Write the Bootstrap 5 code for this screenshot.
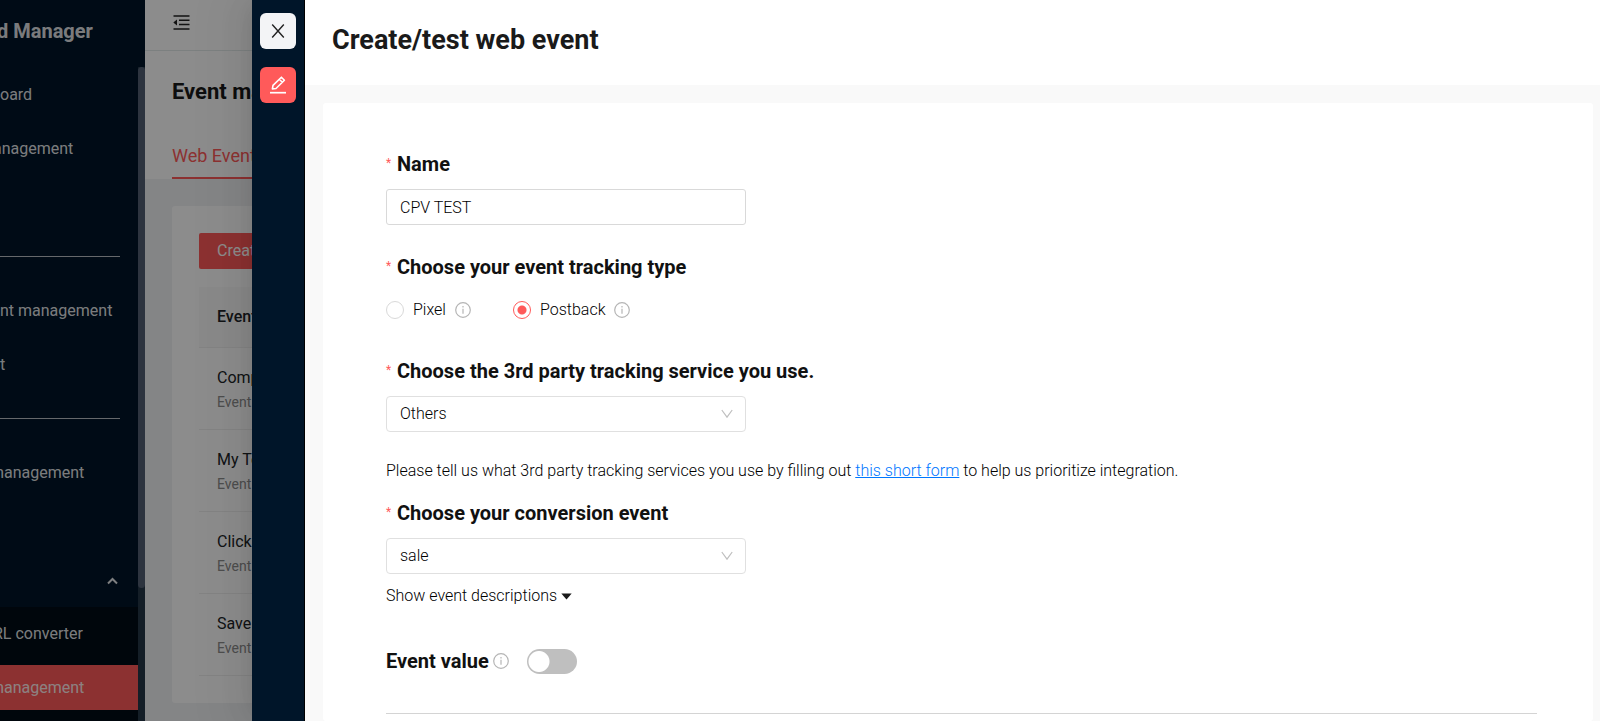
<!DOCTYPE html>
<html lang="en">
<head>
<meta charset="utf-8">
<meta name="viewport" content="width=device-width, initial-scale=1">
<title>Create/test web event</title>
<link href="https://cdn.jsdelivr.net/npm/bootstrap@5.3.0/dist/css/bootstrap.min.css" rel="stylesheet">
<style>
  :root { --accent: #ff5a5a; --navy: #001529; }
  body { font-family: Roboto, "Liberation Sans", sans-serif; font-size: 16px; line-height: 24px; color: #1a1a1a; }

  /* dimmed page behind the drawer */
  .backdrop-page { width: 252px; }
  .dimmer { background: rgba(0, 0, 0, .45); }
  .side { width: 145px; background: var(--navy); color: rgba(255, 255, 255, .9); }
  .side-brand { height: 67px; font-size: 20px; font-weight: 700; line-height: 63px; text-indent: -3px; }
  .side-scroll { width: 7px; background: #253747; }
  .side-thumb { height: 521px; background: #526074; border-radius: 4px; }
  .side-list { padding-top: 5px; }
  .side-item { height: 45px; margin-bottom: 9px; color: inherit; }
  .side-item hr { width: 120px; margin: 0; opacity: .8; }
  .cut-sm { text-indent: -7px; }
  .cut-lg { text-indent: -10px; }
  .side-caret { margin-left: 107px; }
  .side-sub { background: #000c17; margin-top: -5px; padding-top: 4px; }
  .side-item.current { background: var(--accent); }
  .top-strip { height: 51px; border-bottom: 1px solid #e2eaea; padding: 14px 28px; }
  .page-head { height: 128px; padding: 0 27px; }
  .page-title { font-size: 22px; line-height: 30px; font-weight: 700; padding-top: 26px; margin-bottom: 37px; }
  .page-tab { font-size: 18px; color: var(--accent); height: 35px; border-bottom: 2px solid var(--accent); }
  .page-body { background: #f0f2f5; padding: 27px 0 18px 27px; }
  .page-card { padding: 27px 0 27px 27px; border-radius: 3px; }
  .btn-accent { --bs-btn-bg: var(--accent); --bs-btn-color: #fff; --bs-btn-hover-bg: #ff7676; --bs-btn-hover-color: #fff; --bs-btn-border-radius: 2px; height: 36px; padding: 0 18px; border: 0; margin-bottom: 18px; }
  .event-table { width: 300px; --bs-table-bg: transparent; margin: 0; }
  .event-table th { height: 60px; padding: 0 18px; font-weight: 500; vertical-align: middle; background: #f9f9f9; border-color: #efefef; }
  .event-table td { height: 82px; padding: 4px 18px 0; border-color: #efefef; }
  .event-table small { font-size: 14px; color: #8c8c8c; }

  /* drawer */
  .drawer { z-index: 2; box-shadow: -6px 0 16px -8px rgba(0,0,0,.08), -9px 0 28px rgba(0,0,0,.05), -12px 0 48px 16px rgba(0,0,0,.03); }
  .rail { width: 53px; background: var(--navy); border-right: 1px solid #000; padding-top: 13px; gap: 18px; }
  .rail-btn { width: 36px; height: 36px; padding: 0; border: 0; border-radius: 6px; }
  .rail-close { background: #f3f4f6; }
  .rail-edit { background: var(--accent); }
  .drawer-head { height: 85px; padding: 0 27px; }
  .drawer-title { font-size: 27px; line-height: 80px; font-weight: 700; margin: 0; }
  .drawer-body { background: #f9f9f9; padding: 18px 7px 0 18px; }
  .form-panel { padding: 46px 56px 0 63px; border-radius: 3px; }
  .field-title { font-size: 20px; line-height: 30px; font-weight: 700; color: #111; margin: 0 0 10px; display: flex; }
  .field-title.req::before { content: "*"; color: var(--accent); font-size: 12px; font-weight: 400; width: 11px; line-height: 28px; }
  .field-box { width: 360px; height: 36px; padding: 0 13px; font-size: 16px; color: #000; border-color: #d9d9d9; border-radius: 3px; }
  select.field-box { border-radius: 4px; border-color: #e0e0e0;
    background: #fff url("data:image/svg+xml,%3Csvg xmlns='http://www.w3.org/2000/svg' viewBox='0 0 12 10' fill='none' stroke='%23bfbfbf' stroke-width='1.2'%3E%3Cpath d='M.8 1 6 8.2 11.2 1'/%3E%3C/svg%3E") no-repeat right 12px center / 12px 10px; }
  .gap-after { margin-bottom: 27px; }
  .choice-row { height: 36px; margin-bottom: 28px; gap: 42px; }
  .choice { gap: 9px; }
  .choice .form-check-input { width: 18px; height: 18px; margin: 0; border-color: #d9d9d9; }
  .choice .form-check-input:checked { background: #fff radial-gradient(circle, var(--accent) 4px, transparent 5px); border-color: var(--accent); }
  .drawer-body, .drawer-body .field-box { font-weight: 300; color: #000; }
  .form-hint { margin-bottom: 15px; }
  .form-hint a { color: #0077ff; }
  .link-plain { border: 0; background: none; padding: 0; margin: 10px 0 38px; color: inherit; font-weight: inherit; gap: 4px; }
  .value-row { height: 30px; margin-bottom: 37px; }
  .value-row .field-title { margin: 0; }
  .value-row .form-switch .form-check-input { width: 50px; height: 25px; margin: 0 0 0 2px; float: none; border: 0; background: #bfbfbf radial-gradient(circle at 12px 50%, #fff 10px, transparent 11px); }
  .rule { margin: 0; color: #b8b8b8; opacity: .6; }
</style>
</head>
<body class="d-flex vh-100 overflow-hidden">

<div class="backdrop-page position-relative d-flex flex-shrink-0 overflow-hidden" aria-hidden="true">
  <aside class="side d-flex flex-column flex-shrink-0 text-nowrap overflow-hidden">
    <div class="side-brand flex-shrink-0">d Manager</div>
    <div class="d-flex flex-grow-1 overflow-hidden">
      <nav class="side-list flex-grow-1">
        <a class="side-item d-flex align-items-center text-decoration-none" href="#">oard</a>
        <a class="side-item cut-sm d-flex align-items-center text-decoration-none" href="#">anagement</a>
        <div class="side-item"></div>
        <div class="side-item d-flex align-items-center"><hr></div>
        <a class="side-item d-flex align-items-center text-decoration-none" href="#">nt management</a>
        <a class="side-item d-flex align-items-center text-decoration-none" href="#">t</a>
        <div class="side-item d-flex align-items-center"><hr></div>
        <a class="side-item cut-lg d-flex align-items-center text-decoration-none" href="#">management</a>
        <div class="side-item"></div>
        <div class="side-item d-flex align-items-center">
          <svg class="side-caret" width="11" height="8" viewBox="0 0 11 8" fill="none" stroke="currentColor" stroke-width="2"><path d="M1 6.5 5.5 2 10 6.5"/></svg>
        </div>
        <div class="side-sub">
          <a class="side-item cut-sm d-flex align-items-center text-decoration-none" href="#">RL converter</a>
          <a class="side-item cut-lg current d-flex align-items-center text-decoration-none" href="#">management</a>
          <div class="side-item"></div>
        </div>
      </nav>
      <div class="side-scroll flex-shrink-0"><div class="side-thumb"></div></div>
    </div>
  </aside>
  <main class="flex-shrink-0 bg-white text-nowrap d-flex flex-column">
    <div class="top-strip">
      <svg class="d-block" width="17" height="17" viewBox="0 0 17 17" fill="none" stroke="#222" stroke-width="1.5"><path d="M.5 2h16M6 6.3h10.500M6 10.600h10.500M.5 15h16"/><path d="M4 5.500v6L.3 8.500z" fill="#222" stroke="none"/></svg>
    </div>
    <div class="page-head">
      <h1 class="page-title">Event management</h1>
      <div class="page-tab">Web Events</div>
    </div>
    <div class="page-body flex-grow-1">
      <div class="page-card bg-white">
        <button class="btn btn-accent" type="button" tabindex="-1">Create event</button>
        <table class="table event-table align-middle">
          <thead><tr><th>Event</th></tr></thead>
          <tbody>
            <tr><td>Complete<br><small>Event</small></td></tr>
            <tr><td>My Test<br><small>Event</small></td></tr>
            <tr><td>Click<br><small>Event</small></td></tr>
            <tr><td>Save<br><small>Event</small></td></tr>
          </tbody>
        </table>
      </div>
    </div>
  </main>
  <div class="dimmer position-absolute top-0 start-0 w-100 h-100"></div>
</div>

<section class="drawer position-relative d-flex flex-grow-1">
  <div class="rail d-flex flex-column align-items-center flex-shrink-0">
    <button class="rail-btn rail-close d-flex align-items-center justify-content-center" type="button" aria-label="Close">
      <svg width="14" height="14" viewBox="0 0 14 14" fill="none" stroke="#222" stroke-width="1.400"><path d="M1.200.5 12.800 13.500M12.800.5 1.200 13.500"/></svg>
    </button>
    <button class="rail-btn rail-edit d-flex align-items-center justify-content-center" type="button" aria-label="Edit">
      <svg width="18" height="18" viewBox="0 0 18 18" fill="none" stroke="#fff" stroke-width="1.600" stroke-linejoin="round"><path d="M1 16.700h16" stroke-width="1.700"/><path d="m3.400 13 .6-3.600L12.400 1.200l3 3L7 12.500zM10.300 3.300l3 3"/></svg>
    </button>
  </div>
  <div class="d-flex flex-column flex-grow-1">
    <header class="drawer-head bg-white"><h2 class="drawer-title">Create/test web event</h2></header>
    <div class="drawer-body flex-grow-1 d-flex overflow-hidden">
      <form class="form-panel bg-white flex-grow-1">
        <label class="field-title req" for="eventName">Name</label>
        <input class="form-control field-box gap-after" id="eventName" type="text" value="CPV TEST">

        <div class="field-title req" id="typeTitle">Choose your event tracking type</div>
        <div class="choice-row d-flex align-items-center" role="radiogroup" aria-labelledby="typeTitle">
          <div class="choice d-flex align-items-center">
            <input class="form-check-input" type="radio" name="type" id="typePixel">
            <label for="typePixel">Pixel</label>
            <svg width="16" height="16" viewBox="0 0 16 16" fill="none" stroke="#b5b5b5" stroke-width="1.200"><circle cx="8" cy="8" r="7.300"/><path d="M8 6.800v5M8 4v1.400"/></svg>
          </div>
          <div class="choice d-flex align-items-center">
            <input class="form-check-input" type="radio" name="type" id="typePostback" checked>
            <label for="typePostback">Postback</label>
            <svg width="16" height="16" viewBox="0 0 16 16" fill="none" stroke="#b5b5b5" stroke-width="1.200"><circle cx="8" cy="8" r="7.300"/><path d="M8 6.800v5M8 4v1.400"/></svg>
          </div>
        </div>

        <label class="field-title req" for="service">Choose the 3rd party tracking service you use.</label>
        <select class="form-select field-box gap-after" id="service"><option>Others</option></select>
        <p class="form-hint">Please tell us what 3rd party tracking services you use by filling out <a href="#">this short form</a> to help us prioritize integration.</p>

        <label class="field-title req" for="conversion">Choose your conversion event</label>
        <select class="form-select field-box" id="conversion"><option>sale</option></select>
        <button class="link-plain d-flex align-items-center" type="button">Show event descriptions
          <svg width="11" height="7" viewBox="0 0 11 7"><path d="M.3.5h10.400L5.500 6.500z" fill="#1a1a1a"/></svg>
        </button>

        <div class="value-row d-flex align-items-center">
          <label class="field-title" for="valueSwitch">Event value</label>
          <svg class="ms-1 me-3" width="16" height="16" viewBox="0 0 16 16" fill="none" stroke="#b5b5b5" stroke-width="1.200"><circle cx="8" cy="8" r="7.300"/><path d="M8 6.800v5M8 4v1.400"/></svg>
          <div class="form-switch d-flex p-0"><input class="form-check-input" type="checkbox" role="switch" id="valueSwitch"></div>
        </div>
        <hr class="rule">
      </form>
    </div>
  </div>
</section>

<script src="https://cdn.jsdelivr.net/npm/bootstrap@5.3.0/dist/js/bootstrap.bundle.min.js"></script>
</body>
</html>
